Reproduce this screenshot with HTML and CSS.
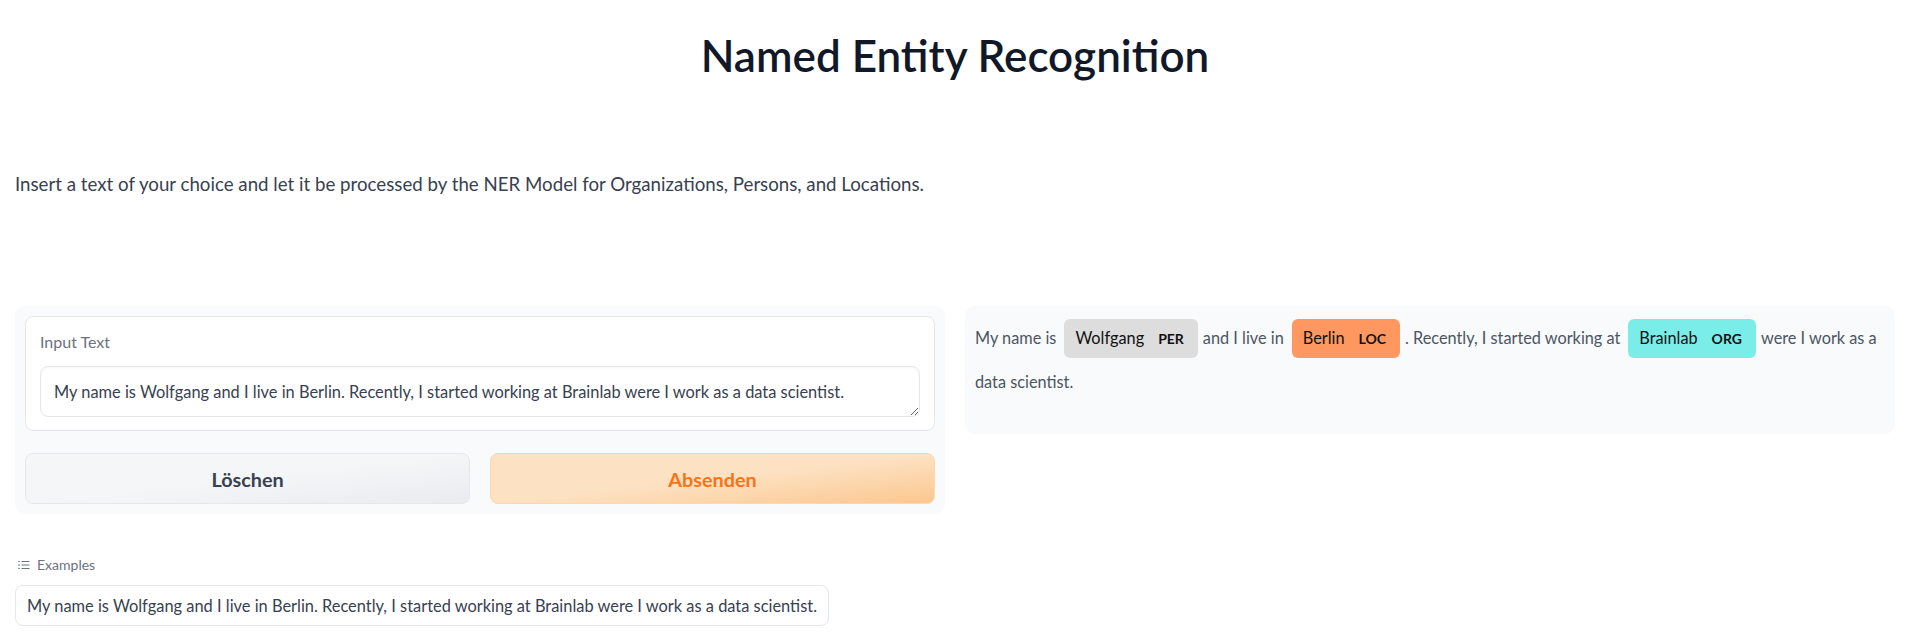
FILE: index.html
```html
<!DOCTYPE html>
<html>
<head>
<meta charset="utf-8">
<link rel="stylesheet" href="styles.css">
</head>
<body>
<div class="app">
  <h1 class="title">Named Entity Recognition</h1>
  <p class="desc">Insert a text of your choice and let it be processed by the NER Model for Organizations, Persons, and Locations.</p>
  <div class="row">
    <div class="panel panel-left">
      <div class="block">
        <label class="label" for="inp">Input Text</label>
        <textarea id="inp" class="input" rows="1">My name is Wolfgang and I live in Berlin. Recently, I started working at Brainlab were I work as a data scientist.</textarea>
      </div>
      <div class="buttons">
        <button class="btn btn-secondary">Löschen</button>
        <button class="btn btn-primary">Absenden</button>
      </div>
    </div>
    <div class="panel panel-right">
      <div class="highlight"><span class="txt">My name is</span><span class="chip chip-per">Wolfgang<span class="tag">PER</span></span><span class="txt">and I live in</span><span class="chip chip-loc">Berlin<span class="tag">LOC</span></span><span class="txt">. Recently, I started working at</span><span class="chip chip-org">Brainlab<span class="tag">ORG</span></span><span class="txt">were I work as a data scientist.</span></div>
    </div>
  </div>
  <div class="examples">
    <div class="examples-label">
      <svg class="list-icon" width="12" height="10" viewBox="0 0 12 10"><circle cx="1" cy="1.5" r="0.8" fill="#6b7280"/><circle cx="1" cy="5" r="0.8" fill="#6b7280"/><circle cx="1" cy="8.5" r="0.8" fill="#6b7280"/><path d="M3.5 1.5H11.5M3.5 5H11.5M3.5 8.5H11.5" stroke="#6b7280" stroke-width="1"/></svg>
      <span>Examples</span>
    </div>
    <button class="example">My name is Wolfgang and I live in Berlin. Recently, I started working at Brainlab were I work as a data scientist.</button>
  </div>
</div>
</body>
</html>
```
FILE: styles.css
```css
* { box-sizing: border-box; }
html, body { margin: 0; background: #ffffff; }
body { font-family: Lato, "Noto Sans", sans-serif; color: #374151; }

.app { padding: 0 15px; }

.title {
  margin: 0;
  padding-top: 29px;
  text-align: center;
  font-size: 44px;
  line-height: 52px;
  font-weight: 600;
  color: #111827;
}

.desc {
  margin: 89px 0 0;
  font-size: 18.7px;
  line-height: 28px;
  color: #374151;
}

.row {
  margin-top: 108px;
  display: flex;
  gap: 20px;
  align-items: flex-start;
}

.panel {
  flex: 1 1 0;
  background: #f9fafb;
  border-radius: 10px;
  padding: 10px;
}

.panel-right { min-height: 128px; }

.block {
  background: #ffffff;
  border: 1px solid #e5e7eb;
  border-radius: 8px;
  padding: 14px 14px 13px;
  display: flex;
  flex-direction: column;
}

.label {
  font-size: 16px;
  line-height: 22px;
  color: #6b7280;
  margin-bottom: 13px;
}

.input {
  display: block;
  width: 100%;
  height: 51px;
  border: 1px solid #e5e7eb;
  border-radius: 8px;
  padding: 13px 13px 12px;
  font-family: inherit;
  font-size: 16.4px;
  line-height: 24px;
  color: #374151;
  background: #ffffff;
  box-shadow: inset 0 1px 2px rgba(0, 0, 0, 0.04);
  outline: none;
}

.buttons {
  margin-top: 22px;
  display: flex;
  gap: 20px;
}

.btn {
  flex: 1 1 0;
  height: 51px;
  border-radius: 8px;
  font-family: inherit;
  font-size: 19.8px;
  font-weight: 700;
  cursor: pointer;
}

.btn-secondary {
  border: 1px solid #e5e7eb;
  background: linear-gradient(to bottom right, rgba(243, 244, 246, 0.7), rgba(243, 244, 246, 0.7), rgba(229, 231, 235, 0.8));
  color: #374151;
}

.btn-primary {
  border: 1px solid #fed7aa;
  background: linear-gradient(to bottom right, rgba(254, 215, 170, 0.7), rgba(254, 215, 170, 0.7), rgba(253, 186, 116, 0.8));
  color: #f97316;
}

.highlight {
  font-size: 16.3px;
  line-height: 44px;
  color: #4b5563;
}

.chip {
  display: inline-block;
  line-height: 38px;
  padding: 0 14px 0 11px;
  margin: 0 5px 0 8px;
  border-radius: 6px;
  color: #111111;
}

.chip-per { background: #dddddd; }
.chip-loc { background: #fe9760; }
.chip-org { background: #7aede9; }

.tag {
  font-size: 14px;
  font-weight: 700;
  margin-left: 14px;
  color: #111111;
}

.examples { margin-top: 42px; }

.examples-label {
  display: flex;
  align-items: center;
  gap: 7px;
  padding-left: 3px;
  font-size: 14px;
  line-height: 18px;
  color: #6b7280;
}

.example {
  margin-top: 11px;
  height: 41px;
  padding: 0 11px;
  border: 1px solid #e5e7eb;
  border-radius: 8px;
  background: #ffffff;
  font-family: inherit;
  font-size: 16.4px;
  color: #374151;
  cursor: pointer;
}
```
